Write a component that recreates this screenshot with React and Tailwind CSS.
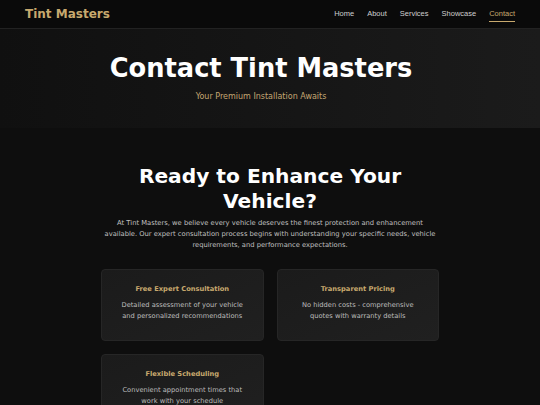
import React from 'react';

const NAV = ['Home', 'About', 'Services', 'Showcase', 'Contact'];

const FEATURES = [
  {
    title: 'Free Expert Consultation',
    text: 'Detailed assessment of your vehicle and personalized recommendations',
  },
  {
    title: 'Transparent Pricing',
    text: 'No hidden costs - comprehensive quotes with warranty details',
  },
  {
    title: 'Flexible Scheduling',
    text: 'Convenient appointment times that work with your schedule',
  },
];

function Header() {
  return (
    <header className="h-[29px] bg-[#0a0a0a] border-b border-[#222] flex items-center justify-between pl-[25px] pr-[25px]">
      <div className="text-[12px] font-bold text-[#c8a96e]">Tint Masters</div>
      <nav className="flex items-center gap-[13px] font-['Liberation_Sans',sans-serif] text-[7.5px]">
        {NAV.map((item) => (
          <a
            key={item}
            className={
              item === 'Contact'
                ? 'text-[#c8a96e] border-b border-[#c8a96e] pb-[1px] mt-[2px]'
                : 'text-[#cfcfcf]'
            }
          >
            {item}
          </a>
        ))}
      </nav>
    </header>
  );
}

function Hero() {
  return (
    <section className="h-[99px] bg-gradient-to-r from-[#101010] to-[#1b1b1b] flex flex-col items-center pt-[21px] pr-[18px]">
      <h1 className="text-[25.7px] leading-[36px] font-bold text-white">Contact Tint Masters</h1>
      <p className="mt-[5px] text-[8px] text-[#c4a672]">Your Premium Installation Awaits</p>
    </section>
  );
}

function FeatureCard({ title, text }) {
  return (
    <div className="h-[72px] rounded-[4px] bg-gradient-to-br from-[#1b1b1b] to-[#202020] border border-[#262626] flex flex-col items-center pt-[14px] px-[17px] text-center">
      <h3 className="text-[6.7px] font-bold text-[#c8a96e] leading-[10px]">{title}</h3>
      <p className="mt-[6px] text-[6.7px] leading-[11px] text-[#bdbdbd]">{text}</p>
    </div>
  );
}

export default function App() {
  return (
    <div className="min-h-[405px] bg-[#0e0e0e] font-['DejaVu_Sans',sans-serif] overflow-hidden">
      <Header />
      <Hero />
      <main className="w-[338px] mx-auto pt-[36px] flex flex-col items-center">
        <h2 className="text-[20.2px] leading-[25px] font-bold text-white text-center">
          Ready to Enhance Your Vehicle?
        </h2>
        <p className="mt-[4px] text-[6.75px] leading-[11px] text-[#c0c0c0] text-center">
          At Tint Masters, we believe every vehicle deserves the finest protection and enhancement
          available. Our expert consultation process begins with understanding your specific needs,
          vehicle requirements, and performance expectations.
        </p>
        <div className="mt-[18px] w-full grid grid-cols-2 gap-[13px]">
          {FEATURES.map((f) => (
            <FeatureCard key={f.title} {...f} />
          ))}
        </div>
      </main>
    </div>
  );
}
